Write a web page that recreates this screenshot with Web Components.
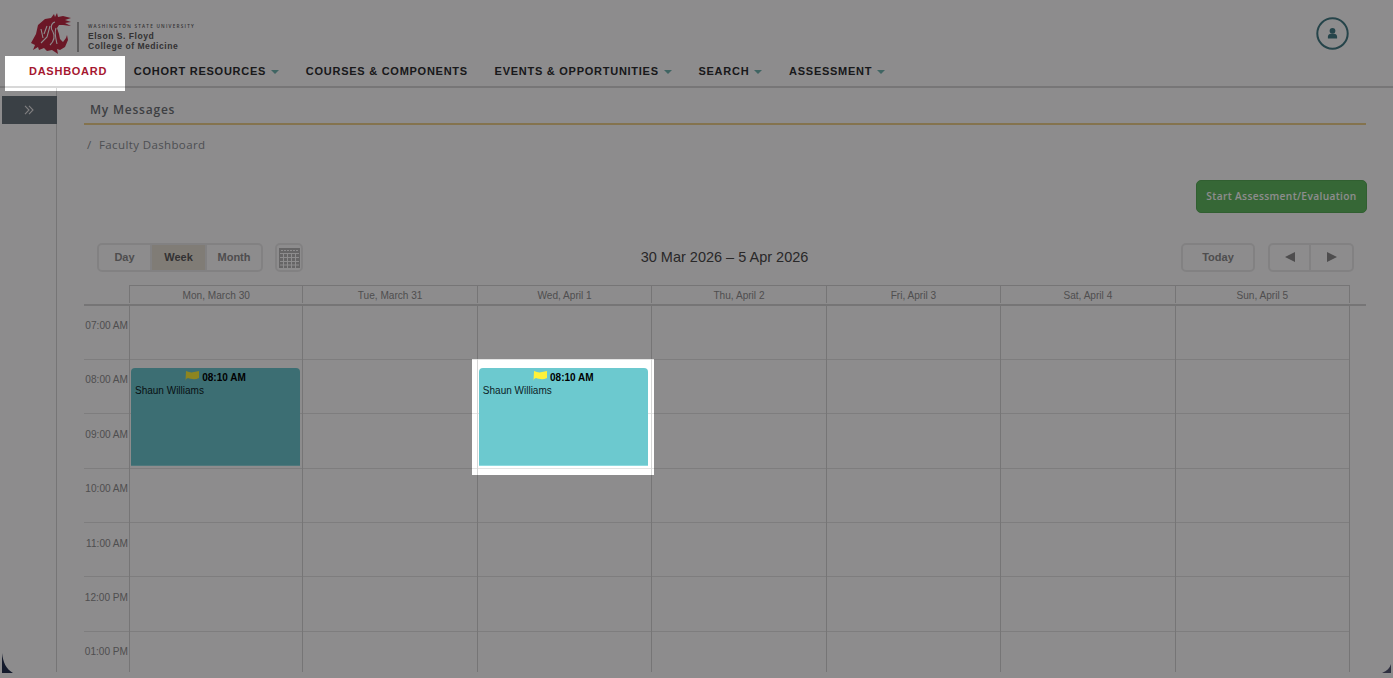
<!DOCTYPE html>
<html>
<head>
<meta charset="utf-8">
<title>Faculty Dashboard</title>
<style>
  html, body { margin: 0; height: 100%; background: #fff; overflow: hidden; }
  body { font-family: "Liberation Sans", Arial, sans-serif; color: #000; }
</style>
</head>
<body>
<wsu-app></wsu-app>

<script>
class WsuLogo extends HTMLElement {
  constructor() {
    super();
    this.attachShadow({ mode: "open" }).innerHTML = `
<style>
  :host { display: flex; align-items: flex-start; height: 56px; box-sizing: border-box; padding: 13px 0 0 30px; }
  svg { display: block; width: 42px; height: 41px; flex: none; }
  .bar { width: 2px; height: 30px; margin: 9px 0 0 5px; background: #a9a9a9; flex: none; }
  .text { margin: 10px 0 0 9px; color: #5c5c5c; font-family: "Liberation Sans", sans-serif; }
  .wsu { font-family: "Open Sans", sans-serif; font-size: 4.6px; line-height: 7px; letter-spacing: 1.25px; font-weight: 600; white-space: nowrap; margin-bottom: 1px; }
  .name { font-size: 8.6px; line-height: 10px; font-weight: 700; letter-spacing: .5px; white-space: nowrap; }
</style>
<svg viewBox="0 0 42 41">
  <path fill="#c22a44" d="M1 30 L6 21 L8 12 L15 6 L21 5 L24 1 L25 4 L27 0 L28 4 L33 3 L41 5 L35 7 L41 9 L35 10 L41 13 L33 12 L29 12 L27 15 L29 21 L30 26 L33 29 L36 25 L37 22 L38 27 L35 34 L30 37 L27 36 L28 41 L22 37 L17 38 L14 35 L9 37 L8 34 L3 37 L5 32 Z"/>
  <path fill="none" stroke="#fff" stroke-width="1.1" d="M11 16 L13 25 M17 13 L14 21 M20 13 L17 24 L11 30 M25 9 C21 10 20 15 23 19 C25 23 24 28 20 32 M26 15 C24 20 26 26 27 31"/>
</svg>
<div class="bar"></div>
<div class="text">
  <div class="wsu">WASHINGTON STATE UNIVERSITY</div>
  <div class="name">Elson S. Floyd</div>
  <div class="name">College of Medicine</div>
</div>`;
  }
}

class NavItem extends HTMLElement {
  constructor() {
    super();
    this.attachShadow({ mode: "open" }).innerHTML = `
<style>
  :host {
    display: flex; align-items: center; gap: 5px; height: 30px;
    font-size: 11px; font-weight: 700; letter-spacing: .74px; color: #2c2e30; white-space: nowrap;
  }
  :host([active]) { color: #a5172f; padding: 0 19px 0 24px; margin-left: 5px; margin-right: -19px; }
  .caret { display: none; width: 0; height: 0; border: 4px solid transparent; border-top-color: #74b8b3; border-bottom: 0; margin-top: 1px; }
  :host([menu]) .caret { display: block; }
</style>
<slot></slot><span class="caret"></span>`;
  }
}

class UserBadge extends HTMLElement {
  constructor() {
    super();
    this.attachShadow({ mode: "open" }).innerHTML = `
<style>
  :host { display: block; width: 33px; height: 33px; }
  svg { display: block; }
</style>
<svg width="33" height="33" viewBox="0 0 33 33">
  <circle cx="16.5" cy="16.5" r="15.2" fill="none" stroke="#437c85" stroke-width="2"/>
  <circle cx="16.5" cy="13.8" r="2.9" fill="#437c85"/>
  <path fill="#437c85" d="M11.9 21.5 v-1.8 c0-2 1.5-3 3-3 h3.2 c1.5 0 3 1 3 3 v1.8 z"/>
</svg>`;
  }
}

class WsuHeader extends HTMLElement {
  constructor() {
    super();
    this.attachShadow({ mode: "open" }).innerHTML = `
<style>
  :host { display: block; height: 88px; box-sizing: border-box; border-bottom: 2px solid #d8d8d8; position: relative; }
  nav { display: flex; gap: 26.7px; }
  user-badge { position: absolute; top: 17px; right: 44px; }
</style>
<wsu-logo></wsu-logo>
<nav>
  <nav-item active>DASHBOARD</nav-item>
  <nav-item menu>COHORT RESOURCES</nav-item>
  <nav-item>COURSES &amp; COMPONENTS</nav-item>
  <nav-item menu>EVENTS &amp; OPPORTUNITIES</nav-item>
  <nav-item menu>SEARCH</nav-item>
  <nav-item menu>ASSESSMENT</nav-item>
</nav>
<user-badge></user-badge>`;
  }
}

class SideRail extends HTMLElement {
  constructor() {
    super();
    this.attachShadow({ mode: "open" }).innerHTML = `
<style>
  :host { display: block; box-sizing: border-box; width: 57px; border-right: 1px solid #d6d6d6; padding: 8px 0 0 2px; }
  .toggle { width: 55px; height: 28px; margin-right: -1px; background: #69757d; display: flex; align-items: center; justify-content: center; box-sizing: border-box; padding-right: 2px; }
  svg { display: block; }
</style>
<div class="toggle">
  <svg width="10" height="10" viewBox="0 0 10 10" fill="none" stroke="#e8e8e8" stroke-width="1.1">
    <path d="M1 .8 L5 5 L1 9.2 M5 .8 L9 5 L5 9.2"/>
  </svg>
</div>`;
  }
}

class ToolButton extends HTMLElement {
  constructor() {
    super();
    this.attachShadow({ mode: "open" }).innerHTML = `
<style>
  :host {
    display: flex; align-items: center; justify-content: center; box-sizing: border-box; height: 29px; padding-bottom: 2px;
    border: 2px solid #ececec; background: #fff; border-radius: 5px;
    font-size: 11px; font-weight: 700; color: #8d8d8d;
  }
  :host([on]) { background: #e8e2d6; color: #5c5c5c; }
  :host([joined-left]) { border-top-right-radius: 0; border-bottom-right-radius: 0; }
  :host([joined-mid]) { border-radius: 0; border-left: 0; }
  :host([joined-right]) { border-top-left-radius: 0; border-bottom-left-radius: 0; border-left: 0; }
</style>
<slot></slot>`;
  }
}

class CalToolbar extends HTMLElement {
  constructor() {
    super();
    this.attachShadow({ mode: "open" }).innerHTML = `
<style>
  :host { display: grid; grid-template-columns: 1fr auto 1fr; align-items: center; height: 29px; margin-left: 13px; margin-right: 12px; }
  .group { display: flex; }
  .left { gap: 12px; }
  .right { gap: 13px; justify-content: flex-end; }
  .title { font-size: 14.5px; color: #4a4a4a; white-space: nowrap; margin: -2px 2px 0 0; }
  .day { width: 55px; } .week { width: 55px; } .month { width: 56px; }
  .icon { width: 28px; } .today { width: 74px; } .pn { width: 43px; }
  svg { display: block; }
</style>
<div class="group left">
  <div class="group">
    <tool-button class="day" joined-left>Day</tool-button>
    <tool-button class="week" joined-mid on>Week</tool-button>
    <tool-button class="month" joined-right>Month</tool-button>
  </div>
  <tool-button class="icon">
    <svg width="21" height="21" viewBox="0 0 21 21" style="margin-top:1px">
      <path fill="#b8b8b8" d="M0 1h21v20H0z"/>
      <path fill="none" stroke="#fff" stroke-width="1" d="M1 6.500h19M1 10.500h19M1 14.500h19M1 18h19M4.500 6v15M8.500 6v15M12.500 6v15M16.500 6v15"/>
      <path fill="none" stroke="#fff" stroke-width="1" stroke-dasharray="2 1" d="M2 3.500h17"/>
    </svg>
  </tool-button>
</div>
<div class="title">30 Mar 2026 – 5 Apr 2026</div>
<div class="group right">
  <tool-button class="today">Today</tool-button>
  <div class="group">
    <tool-button class="pn" joined-left>
      <svg width="10" height="10" viewBox="0 0 10 10"><path fill="#8d8d8d" d="M10 0v10L0 5z"/></svg>
    </tool-button>
    <tool-button class="pn" joined-right>
      <svg width="10" height="10" viewBox="0 0 10 10"><path fill="#8d8d8d" d="M0 0v10l10-5z"/></svg>
    </tool-button>
  </div>
</div>`;
  }
}

class CalEvent extends HTMLElement {
  constructor() {
    super();
    this.attachShadow({ mode: "open" }).innerHTML = `
<style>
  :host {
    position: absolute; top: 62.500px; left: 1px; width: 169px; height: 98px; box-sizing: border-box;
    background: #6cc9cf; border-bottom: 1px solid #8fdbe0; border-radius: 4px 4px 0 0;
    font-size: 10px; color: #0d2226; padding: 2px 4px;
  }
  .time { display: flex; align-items: center; justify-content: center; gap: 3px; height: 14px; font-weight: 700; font-size: 10px; color: #000; }
  .who { line-height: 14px; margin-top: 0; }
  svg { display: block; margin-top: -3px; }
</style>
<div class="time">
  <svg width="14" height="10" viewBox="0 0 14 10"><path fill="#fff23a" d="M1 0 C4 1 6 2 9 1 L14 0 V7 C10 9 6 8 3 7 L1 8 L0.500 10 Z"/></svg>
  <span><slot name="time"></slot></span>
</div>
<div class="who"><slot></slot></div>`;
  }
}

class CalWeek extends HTMLElement {
  constructor() {
    super();
    const days = ["Mon, March 30", "Tue, March 31", "Wed, April 1", "Thu, April 2", "Fri, April 3", "Sat, April 4", "Sun, April 5"];
    const times = ["07:00 AM", "08:00 AM", "09:00 AM", "10:00 AM", "11:00 AM", "12:00 PM", "01:00 PM"];
    const evt = `<cal-event><span slot="time">08:10 AM</span>Shaun Williams</cal-event>`;
    this.attachShadow({ mode: "open" }).innerHTML = `
<style>
  :host { display: block; margin-top: 13px; height: 387px; overflow: hidden; font-size: 10.1px; }
  .cols { display: grid; grid-template-columns: 45px repeat(7, 1fr); width: 1266px; }
  .head { height: 20.500px; box-sizing: border-box; border-bottom: 2px solid #d6d6d6; width: 1282px; }
  .head .cols { height: 18px; }
  .dh { border-top: 1px solid #d6d6d6; border-right: 1px solid #d6d6d6; display: flex; align-items: center; justify-content: center; color: #8f8f8f; padding-top: 1px; }
  .dh.first { border-left: 1px solid #d6d6d6; }
  .axis { grid-column: 1; }
  .t { height: 54.4px; box-sizing: border-box; border-bottom: 1px solid #e4e4e4; text-align: right; padding: 14.500px 1px 0 0; color: #8f8f8f; line-height: 12px; white-space: nowrap; }
  .col { position: relative; border-right: 1px solid #d6d6d6; }
  .col.first { border-left: 1px solid #d6d6d6; }
  .rows div { height: 54.4px; box-sizing: border-box; border-bottom: 1px solid #e4e4e4; }
</style>
<div class="head"><div class="cols"><div></div>${days.map((d, i) => `<div class="dh ${i ? "" : "first"}">${d}</div>`).join("")}</div></div>
<div class="cols">
  <div class="axis">${times.map(t => `<div class="t">${t}</div>`).join("")}</div>
  ${days.map((d, i) => `<div class="col ${i ? "" : "first"}"><div class="rows">${times.map(() => "<div></div>").join("")}</div>${i === 0 || i === 2 ? evt : ""}</div>`).join("")}
</div>`;
  }
}

class MainPanel extends HTMLElement {
  constructor() {
    super();
    this.attachShadow({ mode: "open" }).innerHTML = `
<style>
  :host { display: block; flex: 1; min-width: 0; padding: 0 27px; }
  .msgs {
    height: 37px; box-sizing: border-box; padding: 13.500px 0 0 6px; border-bottom: 2px solid #eed28c;
    font: 600 12px/15px "Open Sans", sans-serif; letter-spacing: .78px; color: #6f7478;
  }
  .crumb { padding: 11.500px 0 0 3px; height: 55px; box-sizing: border-box; font: 400 11.5px/16px "Open Sans", sans-serif; letter-spacing: .38px; color: #8c9196; }
  .crumb i { font-style: normal; margin-right: 4px; }
  .actions { display: flex; justify-content: flex-end; margin-right: -1px; }
  .start {
    width: 171px; height: 33px; box-sizing: border-box; background: #61bc61; border-radius: 5px; padding-bottom: 1px;
    border: 1px solid #58ad58; display: flex; align-items: center; justify-content: center;
    font: 600 10.2px "Open Sans", sans-serif; letter-spacing: .35px; color: #fff; white-space: nowrap;
  }
  cal-toolbar { margin-top: 30px; }
</style>
<div class="msgs">My Messages</div>
<div class="crumb"><i>/</i> Faculty Dashboard</div>
<div class="actions"><div class="start">Start Assessment/Evaluation</div></div>
<cal-toolbar></cal-toolbar>
<cal-week></cal-week>`;
  }
}

class TourOverlay extends HTMLElement {
  constructor() {
    super();
    this.attachShadow({ mode: "open" }).innerHTML = `
<style>
  :host {
    position: fixed; inset: 0; background: rgba(2, 1, 2, .452);
    clip-path: path(evenodd, "M0 0H1393V678H0Z M5 56H125V91H5Z M472 359H654V475H472Z");
  }
</style>`;
  }
}

class WindowCorners extends HTMLElement {
  constructor() {
    super();
    this.attachShadow({ mode: "open" }).innerHTML = `
<style>
  :host { position: fixed; inset: 0; pointer-events: none; }
  svg { position: absolute; bottom: 5px; }
  .l { left: 2px; } .r { right: 2px; }
</style>
<svg class="l" width="11" height="20" viewBox="0 0 11 20"><path fill="#141a2c" d="M0 0 C1 9 4 16 11 20 H0 Z"/></svg>
<svg class="r" width="9" height="9" viewBox="0 0 9 9"><path fill="#2f2f40" d="M9 0 C8 4 5 7 0 9 H9 Z"/></svg>`;
  }
}

class WsuApp extends HTMLElement {
  constructor() {
    super();
    this.attachShadow({ mode: "open" }).innerHTML = `
<style>
  :host { display: block; height: 672px; overflow: hidden; color: #333; }
  .page { display: flex; height: 584px; }
</style>
<wsu-header></wsu-header>
<div class="page">
  <side-rail></side-rail>
  <main-panel></main-panel>
</div>
<tour-overlay></tour-overlay>
<window-corners></window-corners>`;
  }
}

customElements.define("wsu-logo", WsuLogo);
customElements.define("nav-item", NavItem);
customElements.define("user-badge", UserBadge);
customElements.define("wsu-header", WsuHeader);
customElements.define("side-rail", SideRail);
customElements.define("tool-button", ToolButton);
customElements.define("cal-toolbar", CalToolbar);
customElements.define("cal-event", CalEvent);
customElements.define("cal-week", CalWeek);
customElements.define("main-panel", MainPanel);
customElements.define("tour-overlay", TourOverlay);
customElements.define("window-corners", WindowCorners);
customElements.define("wsu-app", WsuApp);
</script>
</body>
</html>
